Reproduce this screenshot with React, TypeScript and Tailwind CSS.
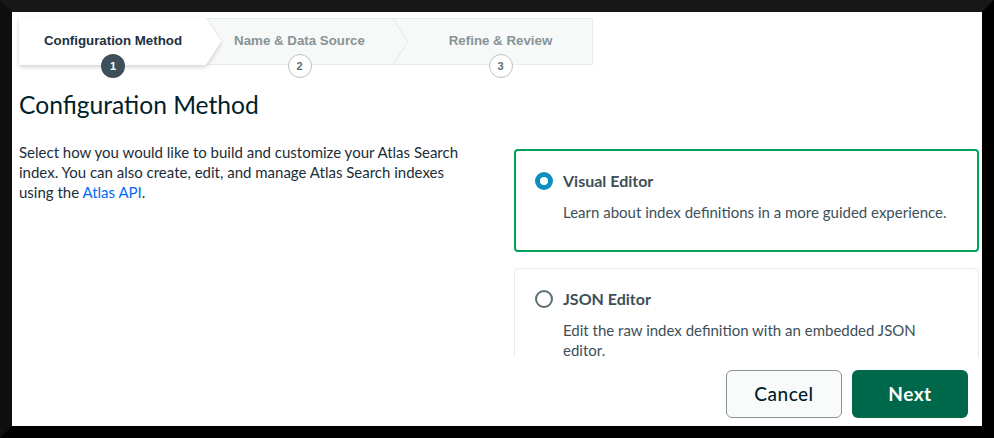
import React from "react";

type Step = { label: string; n: number };

const steps: Step[] = [
  { label: "Configuration Method", n: 1 },
  { label: "Name & Data Source", n: 2 },
  { label: "Refine & Review", n: 3 },
];

function Stepper() {
  return (
    <div className="relative flex h-[47px] w-[574px] border border-[#e6ebeb] bg-[#f7f9f9] font-['Liberation_Sans',Arial,sans-serif]">
      {/* active step */}
      <div className="relative z-10 flex w-[186px] shrink-0 items-center justify-center pb-[2px]">
        <div className="absolute -top-px -bottom-px -left-px w-[202px] drop-shadow-[0_2px_2px_rgba(0,0,0,0.18)]">
          <div className="h-full w-full bg-white [clip-path:polygon(0_0,187px_0,100%_50%,187px_100%,0_100%)]" />
        </div>
        <span className="relative text-[13.3px] font-bold text-[#21313c]">{steps[0].label}</span>
        <span className="absolute left-1/2 top-[35px] flex h-[24px] w-[24px] -translate-x-1/2 items-center justify-center rounded-full bg-[#3d4f58] text-[11px] font-bold text-white">
          1
        </span>
      </div>

      {/* step 2 */}
      <div className="relative flex w-[187px] shrink-0 items-center justify-center pb-[2px]">
        <span className="text-[13.3px] font-bold text-[#889397]">{steps[1].label}</span>
        <svg className="absolute -right-[16px] -top-px" width="17" height="47" viewBox="0 0 17 47">
          <polyline points="0.5,0 16,23.5 0.5,47" fill="none" stroke="#e3e8e8" strokeWidth="1" />
        </svg>
        <span className="absolute left-1/2 top-[35px] flex h-[24px] w-[24px] -translate-x-1/2 items-center justify-center rounded-full border border-[#b8c4c2] bg-white text-[11px] font-bold text-[#5c6c75]">
          2
        </span>
      </div>

      <div className="w-[16px] shrink-0" />

      {/* step 3 */}
      <div className="relative flex flex-1 items-center justify-center pb-[2px]">
        <span className="text-[13.3px] font-bold text-[#889397]">{steps[2].label}</span>
        <span className="absolute left-1/2 top-[35px] flex h-[24px] w-[24px] -translate-x-1/2 items-center justify-center rounded-full border border-[#b8c4c2] bg-white text-[11px] font-bold text-[#5c6c75]">
          3
        </span>
      </div>
    </div>
  );
}

function OptionCard({
  title,
  children,
  selected,
}: {
  title: string;
  children: React.ReactNode;
  selected?: boolean;
}) {
  return (
    <div
      className={
        selected
          ? "rounded-[4px] border-2 border-[#00a35c] bg-white px-[19px] pt-[20px] pb-[28px]"
          : "rounded-[4px] border border-[#e8eded] bg-white px-[20px] pt-[20px] pb-[28px]"
      }
    >
      <div className="flex items-center gap-[10px]">
        {selected ? (
          <span className="h-[18px] w-[18px] shrink-0 rounded-full border-[5px] border-[#0b8fbf] bg-white" />
        ) : (
          <span className="h-[18px] w-[18px] shrink-0 rounded-full border-2 border-[#5c6c75] bg-white" />
        )}
        <span className="text-[16px] leading-[20px] font-bold text-[#3d4f58]">{title}</span>
      </div>
      <p className="mt-[11px] pl-[28px] text-[15px] leading-[20px] text-[#3d4f58]">{children}</p>
    </div>
  );
}

export default function App() {
  return (
    <div className="h-[438px] w-[994px] overflow-hidden border-[12px] border-t-[#171717] border-l-[#0f0f0f] border-r-black border-b-black bg-white font-['Lato','Noto_Sans',sans-serif]">
      <div className="flex h-full flex-col">
        <div className="h-[345px] shrink-0 overflow-hidden pl-[7px] pt-[6px]">
          <Stepper />

          <h1 className="mt-[24px] text-[24.6px] leading-[32px] font-normal text-[#001e2b]">
            Configuration Method
          </h1>

          <div className="flex items-start">
            <p className="mt-[21px] w-[495px] shrink-0 text-[15px] leading-[20px] text-[#1c2d38]">
              Select how you would like to build and customize your Atlas Search
              <br />
              index. You can also create, edit, and manage Atlas Search indexes
              <br />
              using the <span className="text-[#016bf8]">Atlas API</span>.
            </p>

            <div className="mt-[28px] flex w-[465px] shrink-0 flex-col gap-[16px]">
              <OptionCard title="Visual Editor" selected>
                Learn about index definitions in a more guided experience.
              </OptionCard>
              <OptionCard title="JSON Editor">
                Edit the raw index definition with an embedded JSON
                <br />
                editor.
              </OptionCard>
            </div>
          </div>
        </div>

        <div className="flex flex-1 items-start justify-end gap-[10px] pt-[13px] pr-[14px]">
          <button className="h-[48px] w-[116px] rounded-[6px] border border-[#889397] bg-[#f9fbfa] text-[19px] font-medium tracking-[0.5px] text-[#001e2b]">
            Cancel
          </button>
          <button className="h-[48px] w-[116px] rounded-[6px] bg-[#00684a] text-[19px] font-bold tracking-[0.5px] text-white">
            Next
          </button>
        </div>
      </div>
    </div>
  );
}
